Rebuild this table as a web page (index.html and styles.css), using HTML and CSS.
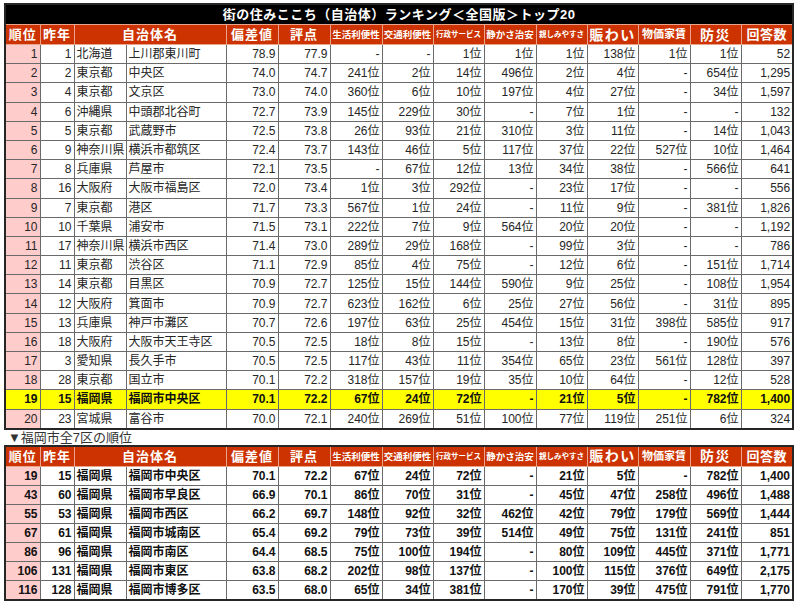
FILE: index.html
```html
<!DOCTYPE html>
<html lang="ja">
<head>
<meta charset="utf-8">
<link rel="stylesheet" href="styles.css">
</head>
<body>
<div class="page">
<table class="rank">
<colgroup>
<col class="c-rank"><col class="c-prev"><col class="c-pref"><col class="c-city"><col class="c-n"><col class="c-n"><col class="c-n"><col class="c-m"><col class="c-m"><col class="c-n"><col class="c-m"><col class="c-m"><col class="c-n"><col class="c-m"><col class="c-n">
</colgroup>
<thead>
<tr class="title-row"><th colspan="15" class="title">街の住みここち（自治体）ランキング＜全国版＞トップ20</th></tr>
<tr class="head">
<th>順位</th><th>昨年</th><th colspan="2">自治体名</th><th>偏差値</th><th>評点</th><th class="s10">生活利便性</th><th class="s10">交通利便性</th><th class="s8">行政サービス</th><th class="s10">静かさ治安</th><th class="s8">親しみやすさ</th><th class="s14">賑わい</th><th class="s11">物価家賃</th><th class="s14">防災</th><th class="s13">回答数</th>
</tr>
</thead>
<tbody>
<tr><td class="rk">1</td><td>1</td><td class="tx">北海道</td><td class="tx">上川郡東川町</td><td>78.9</td><td>77.9</td><td>-</td><td>-</td><td>1位</td><td>1位</td><td>1位</td><td>138位</td><td>1位</td><td>1位</td><td>52</td></tr>
<tr><td class="rk">2</td><td>2</td><td class="tx">東京都</td><td class="tx">中央区</td><td>74.0</td><td>74.7</td><td>241位</td><td>2位</td><td>14位</td><td>496位</td><td>2位</td><td>4位</td><td>-</td><td>654位</td><td>1,295</td></tr>
<tr><td class="rk">3</td><td>4</td><td class="tx">東京都</td><td class="tx">文京区</td><td>73.0</td><td>74.0</td><td>360位</td><td>6位</td><td>10位</td><td>197位</td><td>4位</td><td>27位</td><td>-</td><td>34位</td><td>1,597</td></tr>
<tr><td class="rk">4</td><td>6</td><td class="tx">沖縄県</td><td class="tx">中頭郡北谷町</td><td>72.7</td><td>73.9</td><td>145位</td><td>229位</td><td>30位</td><td>-</td><td>7位</td><td>1位</td><td>-</td><td>-</td><td>132</td></tr>
<tr><td class="rk">5</td><td>5</td><td class="tx">東京都</td><td class="tx">武蔵野市</td><td>72.5</td><td>73.8</td><td>26位</td><td>93位</td><td>21位</td><td>310位</td><td>3位</td><td>11位</td><td>-</td><td>14位</td><td>1,043</td></tr>
<tr><td class="rk">6</td><td>9</td><td class="tx">神奈川県</td><td class="tx">横浜市都筑区</td><td>72.4</td><td>73.7</td><td>143位</td><td>46位</td><td>5位</td><td>117位</td><td>37位</td><td>22位</td><td>527位</td><td>10位</td><td>1,464</td></tr>
<tr><td class="rk">7</td><td>8</td><td class="tx">兵庫県</td><td class="tx">芦屋市</td><td>72.1</td><td>73.5</td><td>-</td><td>67位</td><td>12位</td><td>13位</td><td>34位</td><td>38位</td><td>-</td><td>566位</td><td>641</td></tr>
<tr><td class="rk">8</td><td>16</td><td class="tx">大阪府</td><td class="tx">大阪市福島区</td><td>72.0</td><td>73.4</td><td>1位</td><td>3位</td><td>292位</td><td>-</td><td>23位</td><td>17位</td><td>-</td><td>-</td><td>556</td></tr>
<tr><td class="rk">9</td><td>7</td><td class="tx">東京都</td><td class="tx">港区</td><td>71.7</td><td>73.3</td><td>567位</td><td>1位</td><td>24位</td><td>-</td><td>11位</td><td>9位</td><td>-</td><td>381位</td><td>1,826</td></tr>
<tr><td class="rk">10</td><td>10</td><td class="tx">千葉県</td><td class="tx">浦安市</td><td>71.5</td><td>73.1</td><td>222位</td><td>7位</td><td>9位</td><td>564位</td><td>20位</td><td>20位</td><td>-</td><td>-</td><td>1,192</td></tr>
<tr><td class="rk">11</td><td>17</td><td class="tx">神奈川県</td><td class="tx">横浜市西区</td><td>71.4</td><td>73.0</td><td>289位</td><td>29位</td><td>168位</td><td>-</td><td>99位</td><td>3位</td><td>-</td><td>-</td><td>786</td></tr>
<tr><td class="rk">12</td><td>11</td><td class="tx">東京都</td><td class="tx">渋谷区</td><td>71.1</td><td>72.9</td><td>85位</td><td>4位</td><td>75位</td><td>-</td><td>12位</td><td>6位</td><td>-</td><td>151位</td><td>1,714</td></tr>
<tr><td class="rk">13</td><td>14</td><td class="tx">東京都</td><td class="tx">目黒区</td><td>70.9</td><td>72.7</td><td>125位</td><td>15位</td><td>144位</td><td>590位</td><td>9位</td><td>25位</td><td>-</td><td>108位</td><td>1,954</td></tr>
<tr><td class="rk">14</td><td>12</td><td class="tx">大阪府</td><td class="tx">箕面市</td><td>70.9</td><td>72.7</td><td>623位</td><td>162位</td><td>6位</td><td>25位</td><td>27位</td><td>56位</td><td>-</td><td>31位</td><td>895</td></tr>
<tr><td class="rk">15</td><td>13</td><td class="tx">兵庫県</td><td class="tx">神戸市灘区</td><td>70.7</td><td>72.6</td><td>197位</td><td>63位</td><td>25位</td><td>454位</td><td>15位</td><td>31位</td><td>398位</td><td>585位</td><td>917</td></tr>
<tr><td class="rk">16</td><td>18</td><td class="tx">大阪府</td><td class="tx">大阪市天王寺区</td><td>70.5</td><td>72.5</td><td>18位</td><td>8位</td><td>15位</td><td>-</td><td>13位</td><td>8位</td><td>-</td><td>190位</td><td>576</td></tr>
<tr><td class="rk">17</td><td>3</td><td class="tx">愛知県</td><td class="tx">長久手市</td><td>70.5</td><td>72.5</td><td>117位</td><td>43位</td><td>11位</td><td>354位</td><td>65位</td><td>23位</td><td>561位</td><td>128位</td><td>397</td></tr>
<tr><td class="rk">18</td><td>28</td><td class="tx">東京都</td><td class="tx">国立市</td><td>70.1</td><td>72.2</td><td>318位</td><td>157位</td><td>19位</td><td>35位</td><td>10位</td><td>64位</td><td>-</td><td>12位</td><td>528</td></tr>
<tr class="hl"><td class="rk">19</td><td>15</td><td class="tx">福岡県</td><td class="tx">福岡市中央区</td><td>70.1</td><td>72.2</td><td>67位</td><td>24位</td><td>72位</td><td>-</td><td>21位</td><td>5位</td><td>-</td><td>782位</td><td>1,400</td></tr>
<tr><td class="rk">20</td><td>23</td><td class="tx">宮城県</td><td class="tx">富谷市</td><td>70.0</td><td>72.1</td><td>240位</td><td>269位</td><td>51位</td><td>100位</td><td>77位</td><td>119位</td><td>251位</td><td>6位</td><td>324</td></tr>
</tbody>
</table>

<p class="note">▼福岡市全7区の順位</p>

<table class="rank bold">
<colgroup>
<col class="c-rank"><col class="c-prev"><col class="c-pref"><col class="c-city"><col class="c-n"><col class="c-n"><col class="c-n"><col class="c-m"><col class="c-m"><col class="c-n"><col class="c-m"><col class="c-m"><col class="c-n"><col class="c-m"><col class="c-n">
</colgroup>
<thead>
<tr class="head">
<th>順位</th><th>昨年</th><th colspan="2">自治体名</th><th>偏差値</th><th>評点</th><th class="s10">生活利便性</th><th class="s10">交通利便性</th><th class="s8">行政サービス</th><th class="s10">静かさ治安</th><th class="s8">親しみやすさ</th><th class="s14">賑わい</th><th class="s11">物価家賃</th><th class="s14">防災</th><th class="s13">回答数</th>
</tr>
</thead>
<tbody>
<tr><td class="rk">19</td><td>15</td><td class="tx">福岡県</td><td class="tx">福岡市中央区</td><td>70.1</td><td>72.2</td><td>67位</td><td>24位</td><td>72位</td><td>-</td><td>21位</td><td>5位</td><td>-</td><td>782位</td><td>1,400</td></tr>
<tr><td class="rk">43</td><td>60</td><td class="tx">福岡県</td><td class="tx">福岡市早良区</td><td>66.9</td><td>70.1</td><td>86位</td><td>70位</td><td>31位</td><td>-</td><td>45位</td><td>47位</td><td>258位</td><td>496位</td><td>1,488</td></tr>
<tr><td class="rk">55</td><td>53</td><td class="tx">福岡県</td><td class="tx">福岡市西区</td><td>66.2</td><td>69.7</td><td>148位</td><td>92位</td><td>32位</td><td>462位</td><td>42位</td><td>79位</td><td>179位</td><td>569位</td><td>1,444</td></tr>
<tr><td class="rk">67</td><td>61</td><td class="tx">福岡県</td><td class="tx">福岡市城南区</td><td>65.4</td><td>69.2</td><td>79位</td><td>73位</td><td>39位</td><td>514位</td><td>49位</td><td>75位</td><td>131位</td><td>241位</td><td>851</td></tr>
<tr><td class="rk">86</td><td>96</td><td class="tx">福岡県</td><td class="tx">福岡市南区</td><td>64.4</td><td>68.5</td><td>75位</td><td>100位</td><td>194位</td><td>-</td><td>80位</td><td>109位</td><td>445位</td><td>371位</td><td>1,771</td></tr>
<tr><td class="rk">106</td><td>131</td><td class="tx">福岡県</td><td class="tx">福岡市東区</td><td>63.8</td><td>68.2</td><td>202位</td><td>98位</td><td>137位</td><td>-</td><td>100位</td><td>115位</td><td>376位</td><td>649位</td><td>2,175</td></tr>
<tr><td class="rk">116</td><td>128</td><td class="tx">福岡県</td><td class="tx">福岡市博多区</td><td>63.5</td><td>68.0</td><td>65位</td><td>34位</td><td>381位</td><td>-</td><td>170位</td><td>39位</td><td>475位</td><td>791位</td><td>1,770</td></tr>
</tbody>
</table>
</div>
</body>
</html>
```

FILE: styles.css
```css
html, body {
  margin: 0;
  padding: 0;
  background: #ffffff;
}

body {
  font-family: "Liberation Sans", "Noto Sans CJK JP", sans-serif;
  color: #222222;
}

.page {
  padding: 3px 0 0 4px;
}

.rank {
  border-collapse: collapse;
  table-layout: fixed;
  width: 789px;
  border: 2px solid #262626;
}

.c-rank { width: 35px; }
.c-prev { width: 34px; }
.c-pref { width: 52px; }
.c-city { width: 100px; }
.c-n { width: 52px; }
.c-m { width: 51px; }

.title {
  background: #000000;
  color: #ffffff;
  height: 19px;
  padding: 0;
  font-size: 13px;
  font-weight: bold;
  letter-spacing: 0.5px;
  text-align: center;
  line-height: 19px;
}

.head th {
  background: #cc3300;
  color: #ffffff;
  height: 19px;
  padding: 0;
  border: 1px solid #e9a48c;
  font-size: 13px;
  font-weight: bold;
  letter-spacing: 1px;
  text-align: center;
  white-space: nowrap;
  line-height: 1;
  overflow: hidden;
}

.head th.s8 { font-size: 7.5px; letter-spacing: 0; }
.head th.s10 { font-size: 9.5px; letter-spacing: 0; }
.head th.s11 { font-size: 11px; letter-spacing: 0; }
.head th.s13 { font-size: 13px; letter-spacing: 0.5px; }
.head th.s14 { font-size: 14px; letter-spacing: 1.5px; }

.rank td {
  height: 18.2px;
  padding: 0 2px;
  border: 1px solid #6a6a6a;
  font-size: 12px;
  line-height: 1;
  text-align: right;
  white-space: nowrap;
  overflow: hidden;
  color: #262626;
}

.rank td.tx {
  text-align: left;
  padding-left: 2px;
  padding-right: 0;
}

.rank td.rk {
  background: #ffcccc;
}

.rank tr.hl td {
  background: #ffff00;
  font-weight: bold;
  color: #111111;
}

.bold td {
  font-weight: bold;
  color: #111111;
}

.bold tbody td {
  height: 18px;
}

.note {
  margin: 0;
  height: 15px;
  padding-left: 4px;
  font-size: 13px;
  line-height: 16px;
  color: #333333;
}
```
